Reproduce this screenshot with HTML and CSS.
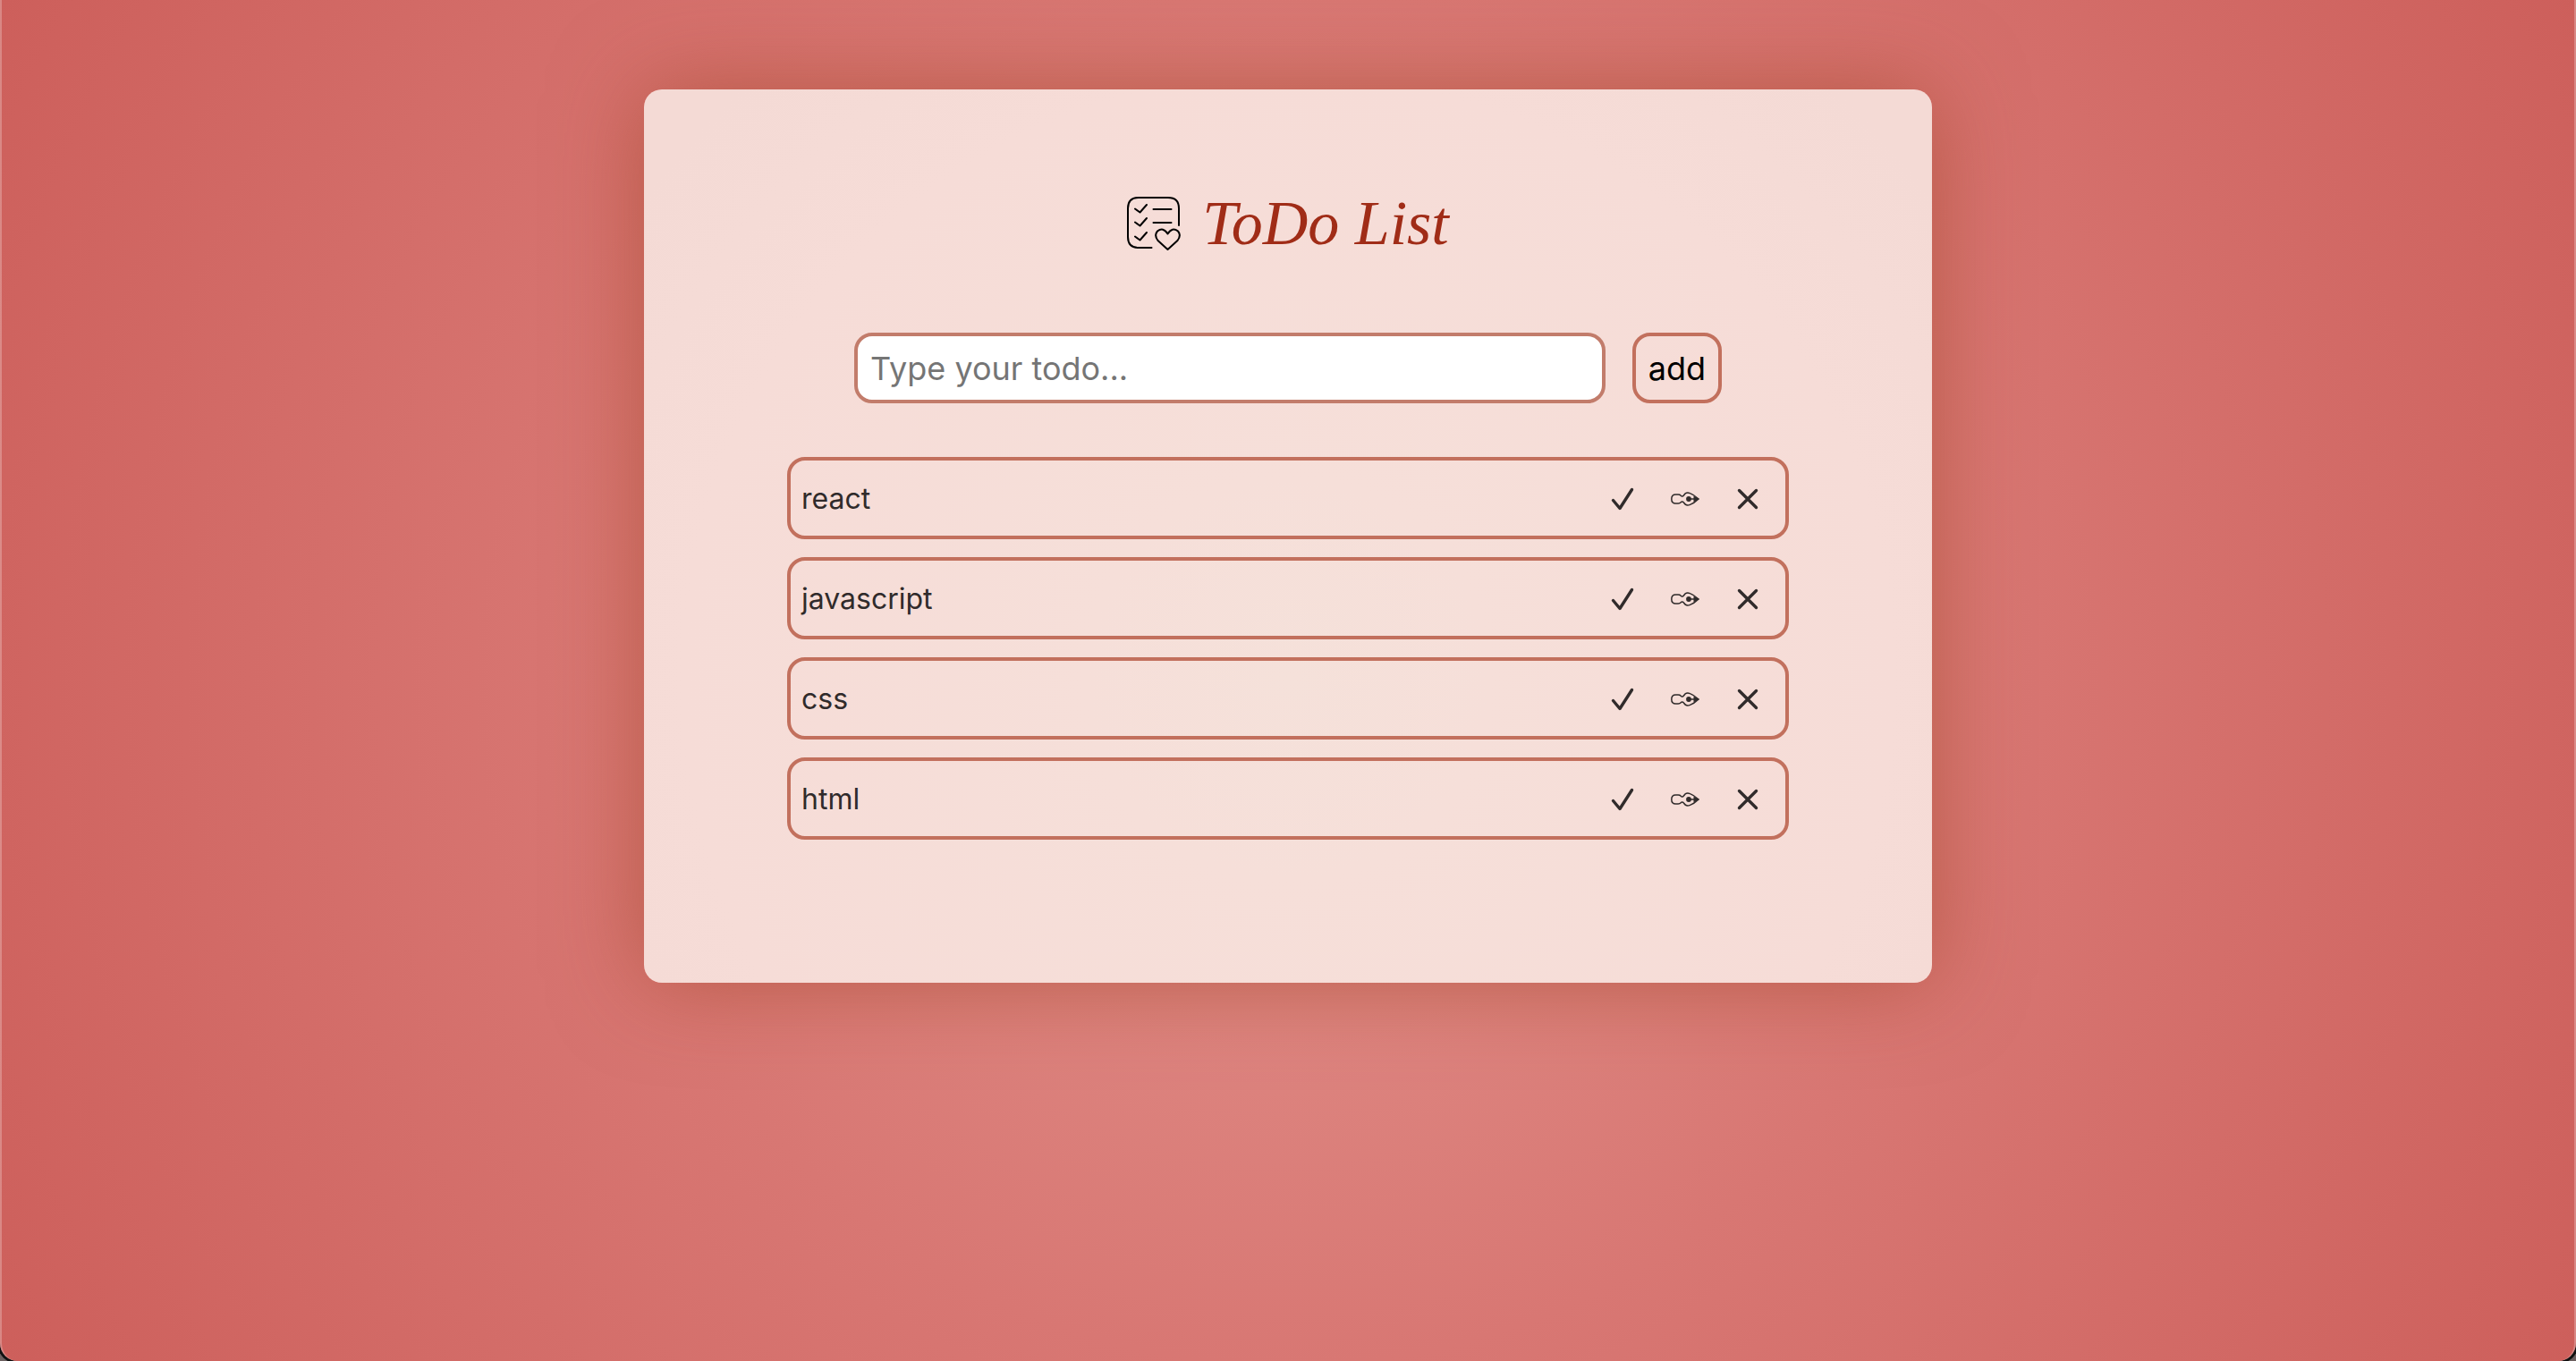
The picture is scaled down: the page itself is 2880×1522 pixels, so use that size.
FILE: index.html
```html
<!DOCTYPE html>
<html lang="en">
<head>
<meta charset="utf-8">
<meta name="viewport" content="width=device-width, initial-scale=1">
<title>ToDo List</title>
<link rel="stylesheet" href="styles.css">
</head>
<body>
<svg class="sprite" aria-hidden="true">
  <symbol id="check" viewBox="0 0 32 32"><path d="M5.500 17.500 13 26.500 26.500 5.500" fill="none" stroke="currentColor" stroke-width="3.400" stroke-linecap="round" stroke-linejoin="round"/></symbol>
  <symbol id="pen" viewBox="0 0 32 32"><path d="M11.200 12.200Q10.200 11 8.200 11H5.500Q.8 11 .8 16T5.500 21H8.200Q10.200 21 11.200 19.800 12 18.600 13.500 19.100L14.600 20.200Q17 24.500 21.500 22.400 26 20.800 31 16 26 11.200 21.500 9.600 17 7.500 14.600 11.800L13.500 12.900Q12 13.400 11.200 12.200Z" fill="none" stroke="currentColor" stroke-width="1.500" stroke-linejoin="round"/><circle cx="20" cy="16" r="2.900" fill="currentColor"/><path d="M20 16H27" stroke="currentColor" stroke-width="1.500"/><path d="M25.500 12.500 32 16 25.500 19.500Z" fill="currentColor"/></symbol>
  <symbol id="cross" viewBox="0 0 32 32"><path d="M6.500 6.500 25.500 25.500M25.500 6.500 6.500 25.500" fill="none" stroke="currentColor" stroke-width="3.400" stroke-linecap="round"/></symbol>
</svg>
<div class="page">
  <main class="card">
    <h1 class="title">
      <svg class="logo" viewBox="0 0 60 60" fill="none" stroke="#000" stroke-width="2" stroke-linecap="round" stroke-linejoin="round" aria-hidden="true">
        <path d="M27.500 57H13Q1 57 1 45V13Q1 1 13 1H46Q58 1 58 13V32"/>
        <path d="M9 13.500 14.500 17.500 22 9M9 28.500 14.500 32.500 22 24M9 44.500 14.500 48.500 22 40M29.500 14H49.500M29.500 29H49.500"/>
        <path d="M45.500 59 34.500 49Q30 43 34 38.500 40.500 33.500 45.500 41.500 50.500 33.500 57 38.500 61 43 56.500 49Z"/>
      </svg>
      <span>ToDo List</span>
    </h1>
    <form class="entry">
      <input class="field" type="text" placeholder="Type your todo..." aria-label="Todo">
      <button class="add" type="button">add</button>
    </form>
    <ul class="list">
      <li class="item"><span class="name">react</span>
        <button class="tool" type="button" aria-label="Complete react"><svg><use href="#check"/></svg></button>
        <button class="tool" type="button" aria-label="Edit react"><svg><use href="#pen"/></svg></button>
        <button class="tool" type="button" aria-label="Delete react"><svg><use href="#cross"/></svg></button></li>
      <li class="item"><span class="name">javascript</span>
        <button class="tool" type="button" aria-label="Complete javascript"><svg><use href="#check"/></svg></button>
        <button class="tool" type="button" aria-label="Edit javascript"><svg><use href="#pen"/></svg></button>
        <button class="tool" type="button" aria-label="Delete javascript"><svg><use href="#cross"/></svg></button></li>
      <li class="item"><span class="name">css</span>
        <button class="tool" type="button" aria-label="Complete css"><svg><use href="#check"/></svg></button>
        <button class="tool" type="button" aria-label="Edit css"><svg><use href="#pen"/></svg></button>
        <button class="tool" type="button" aria-label="Delete css"><svg><use href="#cross"/></svg></button></li>
      <li class="item"><span class="name">html</span>
        <button class="tool" type="button" aria-label="Complete html"><svg><use href="#check"/></svg></button>
        <button class="tool" type="button" aria-label="Edit html"><svg><use href="#pen"/></svg></button>
        <button class="tool" type="button" aria-label="Delete html"><svg><use href="#cross"/></svg></button></li>
    </ul>
  </main>
</div>
</body>
</html>
```
FILE: styles.css
```css
* { box-sizing: border-box; }
html { background: #6c6060; }
body {
  margin: 0;
  font-family: Inter, "Liberation Sans", sans-serif;
  color: #302b2b;
}
.sprite { position: absolute; width: 0; height: 0; }
.page {
  min-height: 100vh;
  padding: 100px 0;
  border: solid rgba(255, 255, 255, 0.25);
  border-width: 0 2px;
  border-radius: 0 0 20px 20px;
  background: radial-gradient(circle, #e2928c 0%, #d87773 47%, #cd5f5b 100%) border-box;
  box-shadow: 0 0 0 3px #111;
}
.card {
  width: 50vw;
  margin: 0 auto;
  padding: 108px 160px 160px;
  border-radius: 20px;
  background: radial-gradient(circle 900px at 50% 66%, #f5e1da, #f6dfd9 25%, #f6dcd7 75%, #f4dad5);
  box-shadow: 0 0 100px rgba(170, 75, 50, 0.7);
}
.title {
  display: flex;
  justify-content: center;
  align-items: center;
  gap: 24px;
  margin: 0 0 80px;
  font: italic 400 70px/84px "Apple Chancery", "Liberation Serif", serif;
  color: #a02c17;
}
.logo { width: 60px; height: 60px; }
.entry {
  display: flex;
  justify-content: center;
  gap: 30px;
  margin: 0 0 60px;
}
.field, .add {
  height: 79px;
  margin: 0;
  border: 4px solid #c2705d;
  border-radius: 20px;
  font: 400 36px/44px Inter, "Liberation Sans", sans-serif;
  color: #000;
}
.field {
  flex: 0 1 840px;
  min-width: 0;
  padding: 0 14px;
  border-color: #c27c6b;
  background: #fff;
}
.field::placeholder { color: #757575; opacity: 1; }
.add { width: 100px; padding: 0; background: transparent; }
.list {
  display: grid;
  gap: 20px;
  margin: 0;
  padding: 0;
  list-style: none;
}
.item {
  display: flex;
  align-items: center;
  gap: 38px;
  height: 92px;
  padding: 2px 26px 0 12px;
  border: 4px solid #c2705d;
  border-radius: 20px;
  font-size: 32px;
  line-height: 40px;
}
.name { flex: 1; }
.tool {
  width: 32px;
  height: 32px;
  padding: 0;
  border: 0;
  background: none;
  color: inherit;
}
.tool svg { display: block; width: 32px; height: 32px; }
```
